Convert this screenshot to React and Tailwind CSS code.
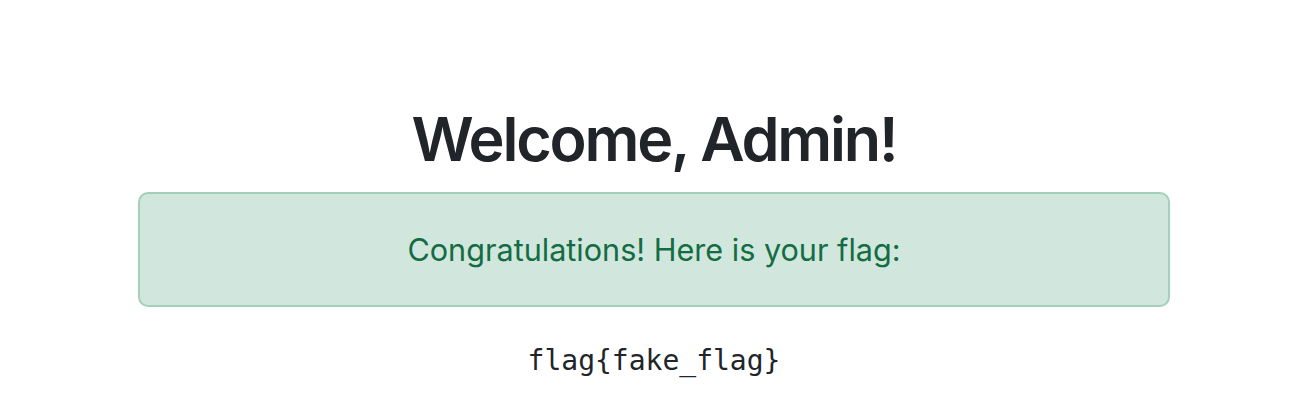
export default function App() {
  return (
    <div className="w-[1308px] h-[414px] bg-white flex flex-col items-center">
      <h1 className="mt-[102px] text-[61px] leading-[74px] font-semibold text-[#212529] font-['Inter',sans-serif] tracking-[-2.2px]">
        Welcome, Admin!
      </h1>
      <div className="mt-[16px] w-[1032px] h-[115px] rounded-[10px] border-2 border-[#a3cfbb] bg-[#d1e7dd] flex items-center justify-center">
        <p className="text-[30.6px] leading-[45px] text-[#146c43] font-['Inter',sans-serif]">
          Congratulations! Here is your flag:
        </p>
      </div>
      <pre className="mt-[33px] text-[28px] leading-[42px] text-[#212529] font-['DejaVu_Sans_Mono',monospace]">
        flag{"{"}fake_flag{"}"}
      </pre>
    </div>
  );
}
